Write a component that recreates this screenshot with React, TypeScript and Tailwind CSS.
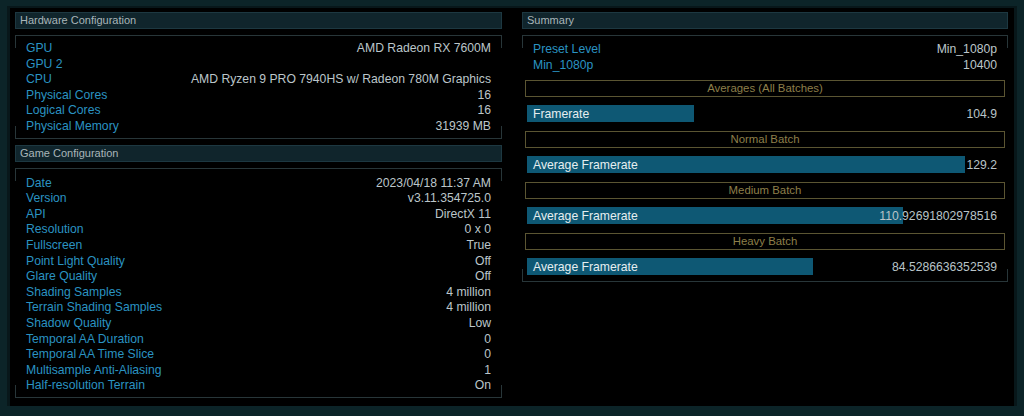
import React from "react";

const hw: [string, string][] = [
  ["GPU", "AMD Radeon RX 7600M"],
  ["GPU 2", ""],
  ["CPU", "AMD Ryzen 9 PRO 7940HS w/ Radeon 780M Graphics"],
  ["Physical Cores", "16"],
  ["Logical Cores", "16"],
  ["Physical Memory", "31939 MB"],
];

const game: [string, string][] = [
  ["Date", "2023/04/18 11:37 AM"],
  ["Version", "v3.11.354725.0"],
  ["API", "DirectX 11"],
  ["Resolution", "0 x 0"],
  ["Fullscreen", "True"],
  ["Point Light Quality", "Off"],
  ["Glare Quality", "Off"],
  ["Shading Samples", "4 million"],
  ["Terrain Shading Samples", "4 million"],
  ["Shadow Quality", "Low"],
  ["Temporal AA Duration", "0"],
  ["Temporal AA Time Slice", "0"],
  ["Multisample Anti-Aliasing", "1"],
  ["Half-resolution Terrain", "On"],
];

const batches: { title: string; label: string; value: string; width: number }[] = [
  { title: "Averages (All Batches)", label: "Framerate", value: "104.9", width: 167 },
  { title: "Normal Batch", label: "Average Framerate", value: "129.2", width: 438 },
  { title: "Medium Batch", label: "Average Framerate", value: "110.92691802978516", width: 376 },
  { title: "Heavy Batch", label: "Average Framerate", value: "84.5286636352539", width: 286 },
];

function Header({ title }: { title: string }) {
  return (
    <div className="h-[17px] bg-[#10252c] border border-[#1d3841] pl-[4px] flex items-center text-[11px] text-[#a9b5b9] leading-none">
      {title}
    </div>
  );
}

function Box({ children, className = "" }: { children: React.ReactNode; className?: string }) {
  return (
    <div className={"relative border-y border-[#283639] " + className}>
      <span className="absolute left-0 top-0 w-px h-[12px] bg-[#283639]" />
      <span className="absolute right-0 top-0 w-px h-[12px] bg-[#283639]" />
      <span className="absolute left-0 bottom-0 w-px h-[12px] bg-[#283639]" />
      <span className="absolute right-0 bottom-0 w-px h-[12px] bg-[#283639]" />
      {children}
    </div>
  );
}

function Row({ k, v }: { k: string; v: string }) {
  return (
    <div className="flex justify-between leading-[15.6px] h-[15.6px] text-[12.2px]">
      <span className="text-[#2a93c2]">{k}</span>
      <span className="text-[#bcc6ca]">{v}</span>
    </div>
  );
}

export default function App() {
  return (
    <div
      className="w-[1024px] h-[416px] bg-[#0c2428] pt-[6px] px-[7px] pb-[10px] flex"
      style={{ fontFamily: '"Liberation Sans", Arial, sans-serif' }}
    >
      <div className="flex-1 bg-black border-x-[3px] border-t-[2px] border-[#08171a] pt-[4px] pl-[5px] pr-[6px] grid grid-cols-[487px_486px] gap-x-[20px] items-start">
        <div className="flex flex-col">
          <Header title="Hardware Configuration" />
          <Box className="mt-[6px] px-[11px] pt-[5px] pb-[3px]">
            {hw.map(([k, v]) => (
              <Row key={k} k={k} v={v} />
            ))}
          </Box>
          <div className="mt-[6px]">
            <Header title="Game Configuration" />
          </div>
          <Box className="mt-[6px] px-[11px] pt-[7px] pb-[3px]">
            {game.map(([k, v]) => (
              <Row key={k} k={k} v={v} />
            ))}
          </Box>
        </div>
        <div className="flex flex-col">
          <Header title="Summary" />
          <Box className="mt-[6px] pt-[6px] pb-[6px]">
            <div className="px-[11px]">
              <Row k="Preset Level" v="Min_1080p" />
              <Row k="Min_1080p" v="10400" />
            </div>
            {batches.map((b, i) => (
              <div key={b.title} className={i === 0 ? "mt-[7px]" : "mt-[9px]"}>
                <div className="mx-[3px] h-[17px] border border-[#5b5532] flex items-center justify-center text-[11.4px] text-[#8d7f4a] leading-none">
                  {b.title}
                </div>
                <div className="mt-[8px] mx-[5px] h-[17px] relative flex items-center justify-between px-[6px] text-[12.2px] leading-none">
                  <div className="absolute left-0 top-0 bottom-0 bg-[#0e5874]" style={{ width: b.width }} />
                  <span className="relative text-[#e6eef0]">{b.label}</span>
                  <span className="relative text-[#b9c4c8]">{b.value}</span>
                </div>
              </div>
            ))}
          </Box>
        </div>
      </div>
    </div>
  );
}
